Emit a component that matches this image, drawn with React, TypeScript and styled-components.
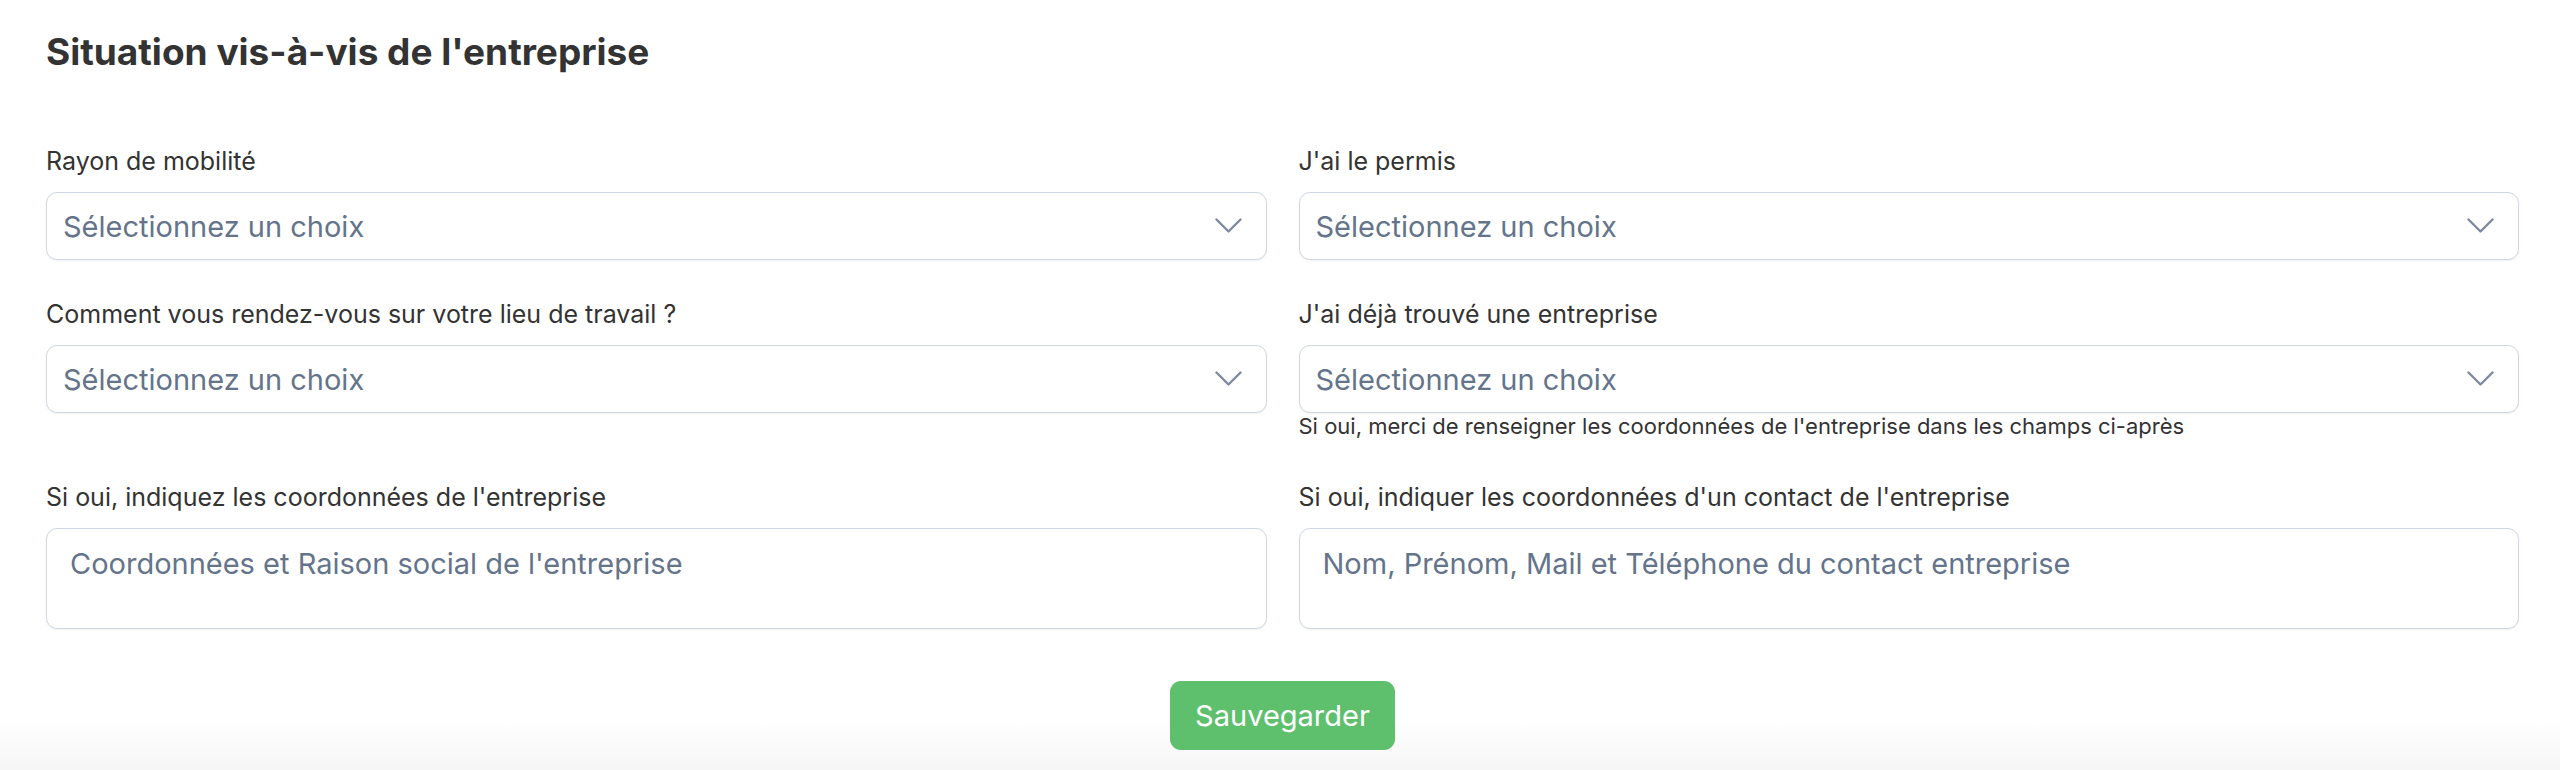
import styled, { createGlobalStyle } from 'styled-components';

const GlobalStyle = createGlobalStyle`
  * {
    box-sizing: border-box;
  }
  body {
    margin: 0;
    font-family: Inter, 'Noto Sans', 'Liberation Sans', sans-serif;
    color: #333;
    background: #fff;
  }
`;

interface Field {
  label: string;
  kind: 'select' | 'textarea';
  placeholder: string;
  help?: string;
}

const fields: Field[] = [
  { label: 'Rayon de mobilité', kind: 'select', placeholder: 'Sélectionnez un choix' },
  { label: "J'ai le permis", kind: 'select', placeholder: 'Sélectionnez un choix' },
  {
    label: 'Comment vous rendez-vous sur votre lieu de travail ?',
    kind: 'select',
    placeholder: 'Sélectionnez un choix',
  },
  {
    label: "J'ai déjà trouvé une entreprise",
    kind: 'select',
    placeholder: 'Sélectionnez un choix',
    help: "Si oui, merci de renseigner les coordonnées de l'entreprise dans les champs ci-après",
  },
  {
    label: "Si oui, indiquez les coordonnées de l'entreprise",
    kind: 'textarea',
    placeholder: "Coordonnées et Raison social de l'entreprise",
  },
  {
    label: "Si oui, indiquer les coordonnées d'un contact de l'entreprise",
    kind: 'textarea',
    placeholder: 'Nom, Prénom, Mail et Téléphone du contact entreprise',
  },
];

const Chevron = () => (
  <svg width="27" height="16" viewBox="0 0 27 16" fill="none" aria-hidden="true">
    <path
      d="M1.5 1.5L13.5 13.5L25.5 1.5"
      stroke="#7d8aa0"
      strokeWidth="2.4"
      strokeLinecap="round"
      strokeLinejoin="round"
    />
  </svg>
);

const App = () => {
  return (
    <Page>
      <GlobalStyle />
      <Title>Situation vis-à-vis de l'entreprise</Title>
      <Grid>
        {fields.map((field) => (
          <FieldBox key={field.label}>
            <Label>{field.label}</Label>
            {field.kind === 'select' ? (
              <SelectBox type="button" aria-haspopup="listbox">
                <Placeholder>{field.placeholder}</Placeholder>
                <Chevron />
              </SelectBox>
            ) : (
              <TextArea placeholder={field.placeholder} />
            )}
            {field.help && <Help>{field.help}</Help>}
          </FieldBox>
        ))}
      </Grid>
      <Actions>
        <SaveButton type="button">Sauvegarder</SaveButton>
      </Actions>
    </Page>
  );
};

export default App;

const Page = styled.main`
  min-height: 770px;
  padding: 30px 41px 0 46px;
  background: linear-gradient(
    to bottom,
    #fff 0,
    #fff 718px,
    #f6f6f7 770px
  );
`;

const Title = styled.h1`
  margin: 0;
  font-size: 37px;
  line-height: 44px;
  font-weight: 700;
  color: #333;
`;

const Grid = styled.div`
  display: grid;
  grid-template-columns: 1fr 1fr;
  column-gap: 32px;
  row-gap: 38px;
  margin-top: 71px;
`;

const FieldBox = styled.div`
  display: flex;
  flex-direction: column;
`;

const Label = styled.label`
  font-size: 25px;
  line-height: 32px;
  color: #333;
  margin-bottom: 15px;
`;

const SelectBox = styled.button`
  display: flex;
  align-items: center;
  justify-content: space-between;
  width: 100%;
  height: 68px;
  padding: 0 24px 0 16px;
  background: #fff;
  border: 1.5px solid #cfd7e3;
  border-radius: 11px;
  box-shadow: 0 1px 2px rgba(15, 23, 42, 0.06);
  font: inherit;
  cursor: pointer;
`;

const Placeholder = styled.span`
  font-size: 29px;
  color: #64748b;
`;

const TextArea = styled.textarea`
  width: 100%;
  height: 101px;
  padding: 15px 23px;
  border: 1.5px solid #cfd7e3;
  border-radius: 11px;
  box-shadow: 0 1px 2px rgba(15, 23, 42, 0.06);
  font-family: inherit;
  font-size: 29px;
  line-height: 40px;
  color: #333;
  resize: none;
  outline: none;

  &::placeholder {
    color: #64748b;
  }
`;

const Help = styled.p`
  margin: 0 0 4px;
  font-size: 22px;
  line-height: 26px;
  color: #333;
`;

const Actions = styled.div`
  display: flex;
  justify-content: center;
  margin-top: 52px;
`;

const SaveButton = styled.button`
  height: 69px;
  padding: 0 25px;
  border: none;
  border-radius: 11px;
  background: #5ec06d;
  color: #fff;
  font-family: inherit;
  font-size: 29px;
  cursor: pointer;
`;
